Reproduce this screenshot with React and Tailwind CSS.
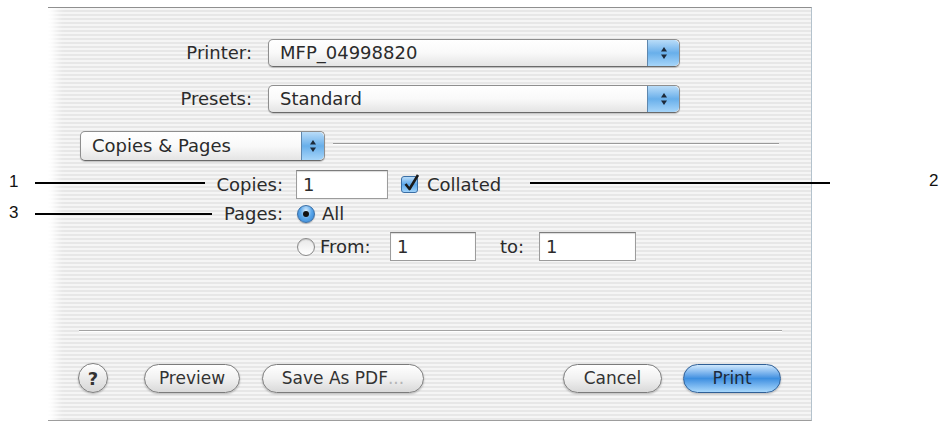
import React from 'react'

const LABEL = "text-[18px] text-[#2b2b2b] leading-none"

function Stepper({ width = 'w-[32px]' }) {
  return (
    <div
      className={`${width} h-full flex items-center justify-center rounded-r-[5px] border-l border-[#5f87ad] bg-linear-to-b from-[#b9dcf8] via-[#68afea] to-[#a6d5f9]`}
    >
      <svg width="8" height="16" viewBox="0 0 8 16">
        <path d="M4 2 L7 6.5 L1 6.5 Z" fill="#1d2a3a" />
        <path d="M4 14 L7 9.5 L1 9.5 Z" fill="#1d2a3a" />
      </svg>
    </div>
  )
}

function Popup({ value, width, height = 'h-[28px]', stepper }) {
  return (
    <div
      className={`flex ${width} ${height} rounded-[5px] border border-[#8e8e8e] border-b-[#6a6a6a] bg-linear-to-b from-white via-[#f9f9f9] to-[#e4e4e4] shadow-[0_1px_1px_rgba(0,0,0,0.2)] overflow-hidden`}
    >
      <span className={`flex-1 flex items-center pl-[11px] ${LABEL}`}>{value}</span>
      <Stepper width={stepper} />
    </div>
  )
}

function TextField({ value, width }) {
  return (
    <div
      className={`${width} h-[29px] flex items-center pl-[6px] bg-white border border-[#9c9c9c] border-t-[#7c7c7c] shadow-[inset_0_1px_1px_rgba(0,0,0,0.15)] ${LABEL}`}
    >
      {value}
    </div>
  )
}

function Radio({ checked }) {
  if (checked) {
    return (
      <div className="w-[18px] h-[18px] rounded-full border border-[#3a6ea5] bg-radial-[at_50%_30%] from-[#d6ecfd] via-[#5ba7ea] to-[#2f7fd0] flex items-center justify-center shadow-[0_1px_1px_rgba(0,0,0,0.25)]">
        <div className="w-[6px] h-[6px] rounded-full bg-[#111]" />
      </div>
    )
  }
  return (
    <div className="w-[18px] h-[18px] rounded-full border border-[#8a8a8a] bg-linear-to-b from-[#e8e8e8] to-white shadow-[inset_0_1px_1px_rgba(0,0,0,0.15)]" />
  )
}

function Checkbox() {
  return (
    <div className="relative w-[17px] h-[17px] rounded-[3px] border border-[#3a6ea5] bg-linear-to-b from-[#b9dcf8] via-[#5ba7ea] to-[#9fd2f9]">
      <svg className="absolute -top-[4px] left-[1px]" width="18" height="20" viewBox="0 0 18 20">
        <path d="M2.5 11 L6.5 16 L15 2" stroke="#1a1a1a" strokeWidth="2.6" fill="none" strokeLinejoin="round" />
      </svg>
    </div>
  )
}

function Button({ children, width, blue }) {
  return (
    <div
      className={classes(
        `${width} h-[29px] rounded-full flex items-center justify-center text-[17px] leading-none shadow-[0_1px_2px_rgba(0,0,0,0.25)]`,
        blue
          ? 'border border-[#2f5f96] bg-linear-to-b from-[#cfe8fd] via-[#3d8fe0] to-[#a8d8fc] text-[#1c2a3c]'
          : 'border border-[#7b7b7b] bg-linear-to-b from-white via-[#f1f1f1] to-[#d9d9d9] text-[#333]'
      )}
    >
      {children}
    </div>
  )
}

function classes(...list) {
  return list.filter(Boolean).join(' ')
}

export default function App() {
  return (
    <div className="relative w-[948px] h-[426px] bg-white overflow-hidden font-['DejaVu_Sans',sans-serif]">
      <div className="ml-[48px] mt-[7px] w-[764px] h-[414px] flex flex-col border-t border-t-[#8f8f8f] border-r border-r-[#b4c2cc] border-b border-b-[#9d9d9d] bg-[image:repeating-linear-gradient(to_bottom,#f5f5f5_0px,#f5f5f5_2px,#e7e7e7_2px,#e7e7e7_4px)] shadow-[inset_14px_0_10px_-6px_white]">
        <div className="flex items-center mt-[31px] h-[28px]">
          <span className={`w-[204px] text-right ${LABEL}`}>Printer:</span>
          <div className="ml-[16px]">
            <Popup value="MFP_04998820" width="w-[412px]" />
          </div>
        </div>

        <div className="flex items-center mt-[18px] h-[28px]">
          <span className={`w-[204px] text-right ${LABEL}`}>Presets:</span>
          <div className="ml-[16px]">
            <Popup value="Standard" width="w-[412px]" />
          </div>
        </div>

        <div className="flex mt-[18px] h-[30px]">
          <div className="ml-[32px]">
            <Popup value="Copies & Pages" width="w-[245px]" height="h-[30px]" stepper="w-[23px]" />
          </div>
          <div className="ml-[8px] mt-[12px] w-[446px] h-[2px] border-t border-[#9a9a9a] bg-white" />
        </div>

        <div className="flex items-center mt-[9px] h-[29px]">
          <span className={`w-[235px] text-right ${LABEL}`}>Copies:</span>
          <div className="ml-[13px]">
            <TextField value="1" width="w-[92px]" />
          </div>
          <div className="ml-[13px]">
            <Checkbox />
          </div>
          <span className={`ml-[9px] ${LABEL}`}>Collated</span>
        </div>

        <div className="flex items-center mt-[3px] h-[24px]">
          <span className={`w-[235px] text-right ${LABEL}`}>Pages:</span>
          <div className="ml-[14px]">
            <Radio checked />
          </div>
          <span className={`ml-[7px] ${LABEL}`}>All</span>
        </div>

        <div className="flex items-center mt-[6px] h-[29px]">
          <div className="ml-[249px]">
            <Radio />
          </div>
          <span className={`ml-[5px] w-[70px] ${LABEL}`}>From:</span>
          <TextField value="1" width="w-[86px]" />
          <span className={`ml-[24px] w-[39px] ${LABEL}`}>to:</span>
          <TextField value="1" width="w-[97px]" />
        </div>

        <div className="ml-[31px] mt-[69px] w-[703px] h-[2px] border-t border-[#a3a3a3] bg-white" />

        <div className="flex items-center mt-[31px] h-[30px]">
          <div className="ml-[30px] w-[30px] h-[30px] rounded-full border border-[#7f7f7f] bg-linear-to-b from-white to-[#d6d6d6] flex items-center justify-center text-[18px] font-bold text-[#333] shadow-[0_1px_2px_rgba(0,0,0,0.25)]">
            ?
          </div>
          <div className="ml-[36px]">
            <Button width="w-[96px]">Preview</Button>
          </div>
          <div className="ml-[22px]">
            <Button width="w-[162px]">
              Save As PDF<span className="text-[#b5b5b5]">...</span>
            </Button>
          </div>
          <div className="ml-[139px]">
            <Button width="w-[99px]">Cancel</Button>
          </div>
          <div className="ml-[21px]">
            <Button width="w-[98px]" blue>
              Print
            </Button>
          </div>
        </div>
      </div>

      {/* callouts */}
      <span className="absolute left-[9px] top-[173px] text-[17px] leading-none text-[#111] font-['Liberation_Sans',sans-serif]">1</span>
      <div className="absolute left-[35px] top-[182px] w-[170px] h-[2px] bg-black" />
      <span className="absolute left-[9px] top-[204px] text-[17px] leading-none text-[#111] font-['Liberation_Sans',sans-serif]">3</span>
      <div className="absolute left-[35px] top-[213px] w-[177px] h-[2px] bg-black" />
      <div className="absolute left-[530px] top-[182px] w-[300px] h-[2px] bg-black" />
      <span className="absolute left-[929px] top-[172px] text-[17px] leading-none text-[#111] font-['Liberation_Sans',sans-serif]">2</span>
    </div>
  )
}
